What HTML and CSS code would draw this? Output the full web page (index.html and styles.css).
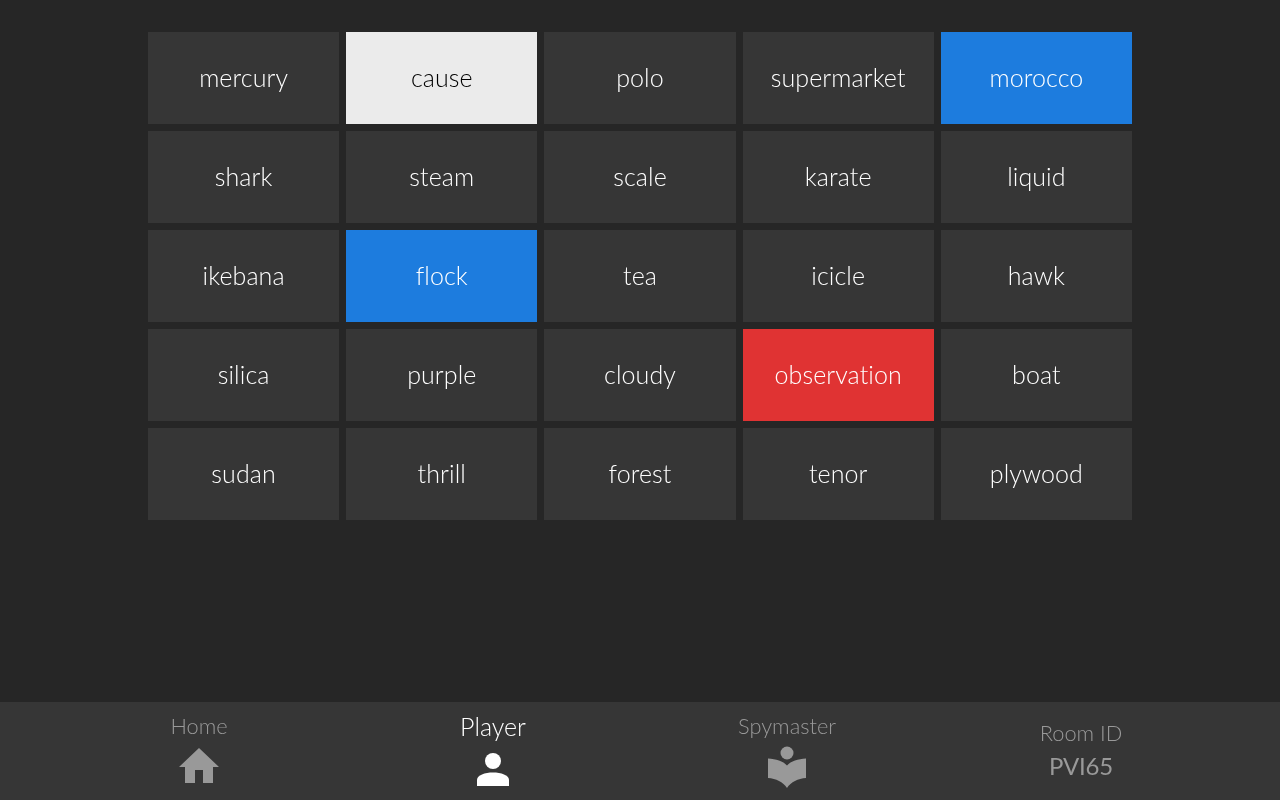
FILE: index.html
```html
<!DOCTYPE html>
<html lang="en">
<head>
<meta charset="utf-8">
<title>Codenames</title>
<link rel="stylesheet" href="styles.css">
</head>
<body>
<main class="board">
  <div class="card">mercury</div><div class="card card-neutral">cause</div><div class="card">polo</div><div class="card">supermarket</div><div class="card card-blue">morocco</div>
  <div class="card">shark</div><div class="card">steam</div><div class="card">scale</div><div class="card">karate</div><div class="card">liquid</div>
  <div class="card">ikebana</div><div class="card card-blue">flock</div><div class="card">tea</div><div class="card">icicle</div><div class="card">hawk</div>
  <div class="card">silica</div><div class="card">purple</div><div class="card">cloudy</div><div class="card card-red">observation</div><div class="card">boat</div>
  <div class="card">sudan</div><div class="card">thrill</div><div class="card">forest</div><div class="card">tenor</div><div class="card">plywood</div>
</main>
<nav class="footer">
  <div class="tab">
    <span class="tab-label">Home</span>
    <svg class="icon" width="40" height="36" viewBox="0 0 40 36"><path fill="currentColor" d="M20 0 40 19H34V35H24V22H16V35H6V19H0Z"/></svg>
  </div>
  <div class="tab tab-active">
    <span class="tab-label">Player</span>
    <svg class="icon" width="34" height="34" viewBox="0 0 34 34"><circle fill="currentColor" cx="17" cy="9" r="8"/><path fill="currentColor" d="M1 34V28C1 23 9 20.500 17 20.500S33 23 33 28V34Z"/></svg>
  </div>
  <div class="tab">
    <span class="tab-label">Spymaster</span>
    <svg class="icon icon-book" width="38" height="42" viewBox="0 0 38 42"><circle fill="currentColor" cx="19" cy="7" r="6.500"/><path fill="currentColor" d="M0 12.500C8 13 15 15 19 19.500 23 15 30 13 38 12.500V32C30 32.500 23 36 19 42 15 36 8 32.500 0 32Z"/></svg>
  </div>
  <div class="tab room">
    <span class="tab-label">Room ID</span>
    <span class="room-id">PVI65</span>
  </div>
</nav>
</body>
</html>
```

FILE: styles.css
```css
* { box-sizing: border-box; }
html, body { margin: 0; height: 100%; }
body {
  background: #262626;
  font-family: "Lato", "Open Sans", sans-serif;
  font-weight: 300;
  color: #fff;
  display: flex;
  flex-direction: column;
  justify-content: space-between;
  height: 800px;
  overflow: hidden;
}
.board {
  width: 984px;
  margin: 32px auto 0;
  display: grid;
  grid-template-columns: repeat(5, 1fr);
  grid-auto-rows: 92px;
  gap: 7px;
  will-change: opacity;
}
.card {
  background: #363636;
  display: flex;
  align-items: center;
  justify-content: center;
  font-size: 25px;
  letter-spacing: 0.1px;
  padding-bottom: 2px;
}
.card-neutral { background: #ebebeb; color: #000; }
.card-blue { background: #1d7cde; }
.card-red { background: #e03333; }
.footer {
  height: 98px;
  background: #363636;
  padding: 0 52px;
  display: grid;
  grid-template-columns: repeat(4, 1fr);
}
.tab {
  display: flex;
  flex-direction: column;
  align-items: center;
  color: #999;
  padding-top: 11px;
  will-change: opacity;
}
.tab-label { font-size: 21.800px; line-height: 26px; height: 35px; }
.tab-active { color: #fff; }
.tab-active .tab-label { font-size: 25px; height: 39px; padding-top: 0; }
.icon { display: block; }
.icon-book { margin-top: -2px; }
.room { padding-top: 18px; }
.room .tab-label { height: 32px; }
.room-id { font-size: 24px; font-weight: 400; line-height: 28px; letter-spacing: -0.2px; }
```
